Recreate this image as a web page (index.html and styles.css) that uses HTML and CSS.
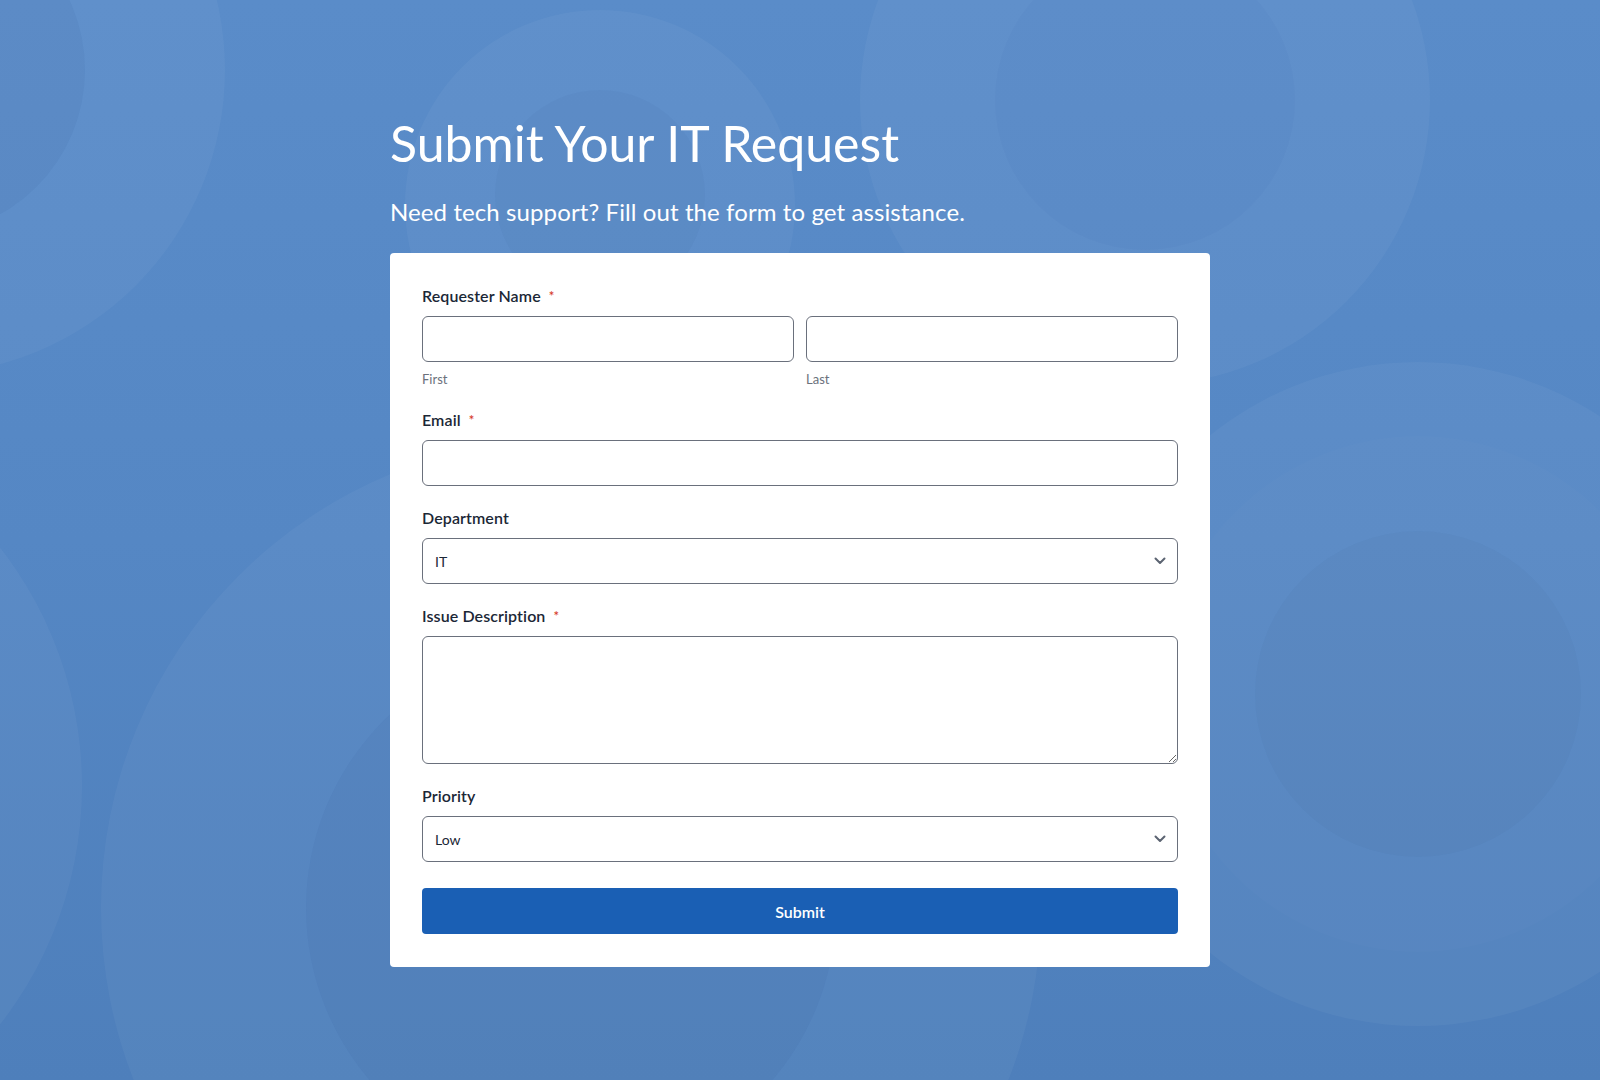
FILE: index.html
```html
<!DOCTYPE html>
<html lang="en">
<head>
<meta charset="utf-8">
<title>Submit Your IT Request</title>
<link rel="stylesheet" href="styles.css">
</head>
<body>
<div class="bg" aria-hidden="true">
  <div class="ring r1"><div class="core c1"></div></div>
  <div class="ring r2"><div class="core c2"></div></div>
  <div class="ring r3"><div class="core c3"></div></div>
  <div class="ring r4"><div class="core c4a"><div class="core c4b"></div></div></div>
  <div class="ring r5"><div class="core c5"></div></div>
  <div class="ring r6"></div>
</div>
<main class="page">
  <h1 class="title">Submit Your IT Request</h1>
  <p class="subtitle">Need tech support? Fill out the form to get assistance.</p>
  <form class="card">
    <div class="field">
      <label class="label">Requester Name <span class="req">*</span></label>
      <div class="name-row">
        <div class="name-col">
          <input class="input" type="text">
          <span class="sub">First</span>
        </div>
        <div class="name-col">
          <input class="input" type="text">
          <span class="sub">Last</span>
        </div>
      </div>
    </div>
    <div class="field">
      <label class="label">Email <span class="req">*</span></label>
      <input class="input" type="email">
    </div>
    <div class="field">
      <label class="label">Department</label>
      <div class="select-wrap">
        <select class="input select"><option>IT</option></select>
        <svg class="chev" width="12" height="8" viewBox="0 0 12 8"><path d="M1.5 1.5 L6 6 L10.5 1.5" fill="none" stroke="#5c6472" stroke-width="2" stroke-linecap="round" stroke-linejoin="round"/></svg>
      </div>
    </div>
    <div class="field">
      <label class="label">Issue Description <span class="req">*</span></label>
      <textarea class="input textarea"></textarea>
    </div>
    <div class="field">
      <label class="label">Priority</label>
      <div class="select-wrap">
        <select class="input select"><option>Low</option></select>
        <svg class="chev" width="12" height="8" viewBox="0 0 12 8"><path d="M1.5 1.5 L6 6 L10.5 1.5" fill="none" stroke="#5c6472" stroke-width="2" stroke-linecap="round" stroke-linejoin="round"/></svg>
      </div>
    </div>
    <button class="submit" type="button">Submit</button>
  </form>
</main>
</body>
</html>
```
FILE: styles.css
```css
* { box-sizing: border-box; }
html, body { margin: 0; padding: 0; }
body {
  width: 1600px;
  height: 1080px;
  overflow: hidden;
  background: linear-gradient(180deg, #5a8cc9 0%, #5587c4 50%, #4e7fbb 100%);
  font-family: Lato, "Open Sans", sans-serif;
  position: relative;
}
.bg { position: absolute; inset: 0; overflow: hidden; pointer-events: none; }
.ring { position: absolute; border-radius: 50%; background: rgba(255,255,255,0.04); }
.core { position: absolute; border-radius: 50%; }
.r1 { left: -385px; top: -235px; width: 610px; height: 610px; }
.c1 { left: 140px; top: 140px; width: 330px; height: 330px; background: rgba(20,50,110,0.05); }
.r2 { left: 405px; top: 10px; width: 390px; height: 390px; }
.c2 { left: 90px; top: 80px; width: 210px; height: 210px; background: rgba(20,50,110,0.035); }
.r3 { left: 860px; top: -185px; width: 570px; height: 570px; }
.c3 { left: 135px; top: 135px; width: 300px; height: 300px; background: rgba(20,50,110,0.025); }
.r4 { left: 1086px; top: 362px; width: 664px; height: 664px; }
.c4a { left: 74px; top: 74px; width: 516px; height: 516px; background: rgba(255,255,255,0.015); }
.c4b { left: 95px; top: 95px; width: 326px; height: 326px; background: rgba(20,50,110,0.03); }
.r5 { left: 101px; top: 438px; width: 940px; height: 940px; }
.c5 { left: 205px; top: 205px; width: 530px; height: 530px; background: rgba(20,50,110,0.045); }
.r6 { left: -694px; top: 398px; width: 776px; height: 776px; }

.page {
  position: relative;
  width: 820px;
  margin-left: 390px;
  padding-top: 113px;
}
.title {
  margin: 0;
  font-size: 50px;
  line-height: 60px;
  font-weight: 400;
  color: #ffffff;
}
.subtitle {
  margin: 24px 0 26px;
  font-size: 24px;
  line-height: 30px;
  font-weight: 400;
  letter-spacing: 0.1px;
  color: #ffffff;
}
.card {
  background: #ffffff;
  border-radius: 4px;
  padding: 33px 32px 33px;
  display: flex;
  flex-direction: column;
  gap: 22px;
}
.field { display: flex; flex-direction: column; }
.label {
  font-size: 16px;
  line-height: 20px;
  font-weight: 600;
  color: #1b2736;
  margin-bottom: 10px;
  letter-spacing: 0.1px;
}
.req { color: #d63b2a; font-size: 13px; margin-left: 4px; vertical-align: 1px; }
.name-row { display: flex; gap: 12px; }
.name-col { flex: 1; display: flex; flex-direction: column; }
.sub {
  margin-top: 8px;
  font-size: 13px;
  line-height: 18px;
  color: #6b717c;
}
.input {
  display: block;
  width: 100%;
  height: 46px;
  border: 1px solid #6a707c;
  border-radius: 6px;
  background: #ffffff;
  font-family: Lato, "Open Sans", sans-serif;
  font-size: 14px;
  color: #1b2736;
  padding: 0 13px;
  margin: 0;
  outline: none;
}
.select-wrap { position: relative; }
.select { appearance: none; -webkit-appearance: none; padding-left: 12px; }
.chev { position: absolute; right: 12px; top: 19px; }
.textarea { height: 128px; resize: vertical; padding: 12px 13px; }
.submit {
  margin-top: 4px;
  height: 46px;
  border: none;
  border-radius: 4px;
  background: #1a5fb4;
  color: #ffffff;
  font-family: Lato, "Open Sans", sans-serif;
  font-size: 16px;
  font-weight: 600;
}
```
